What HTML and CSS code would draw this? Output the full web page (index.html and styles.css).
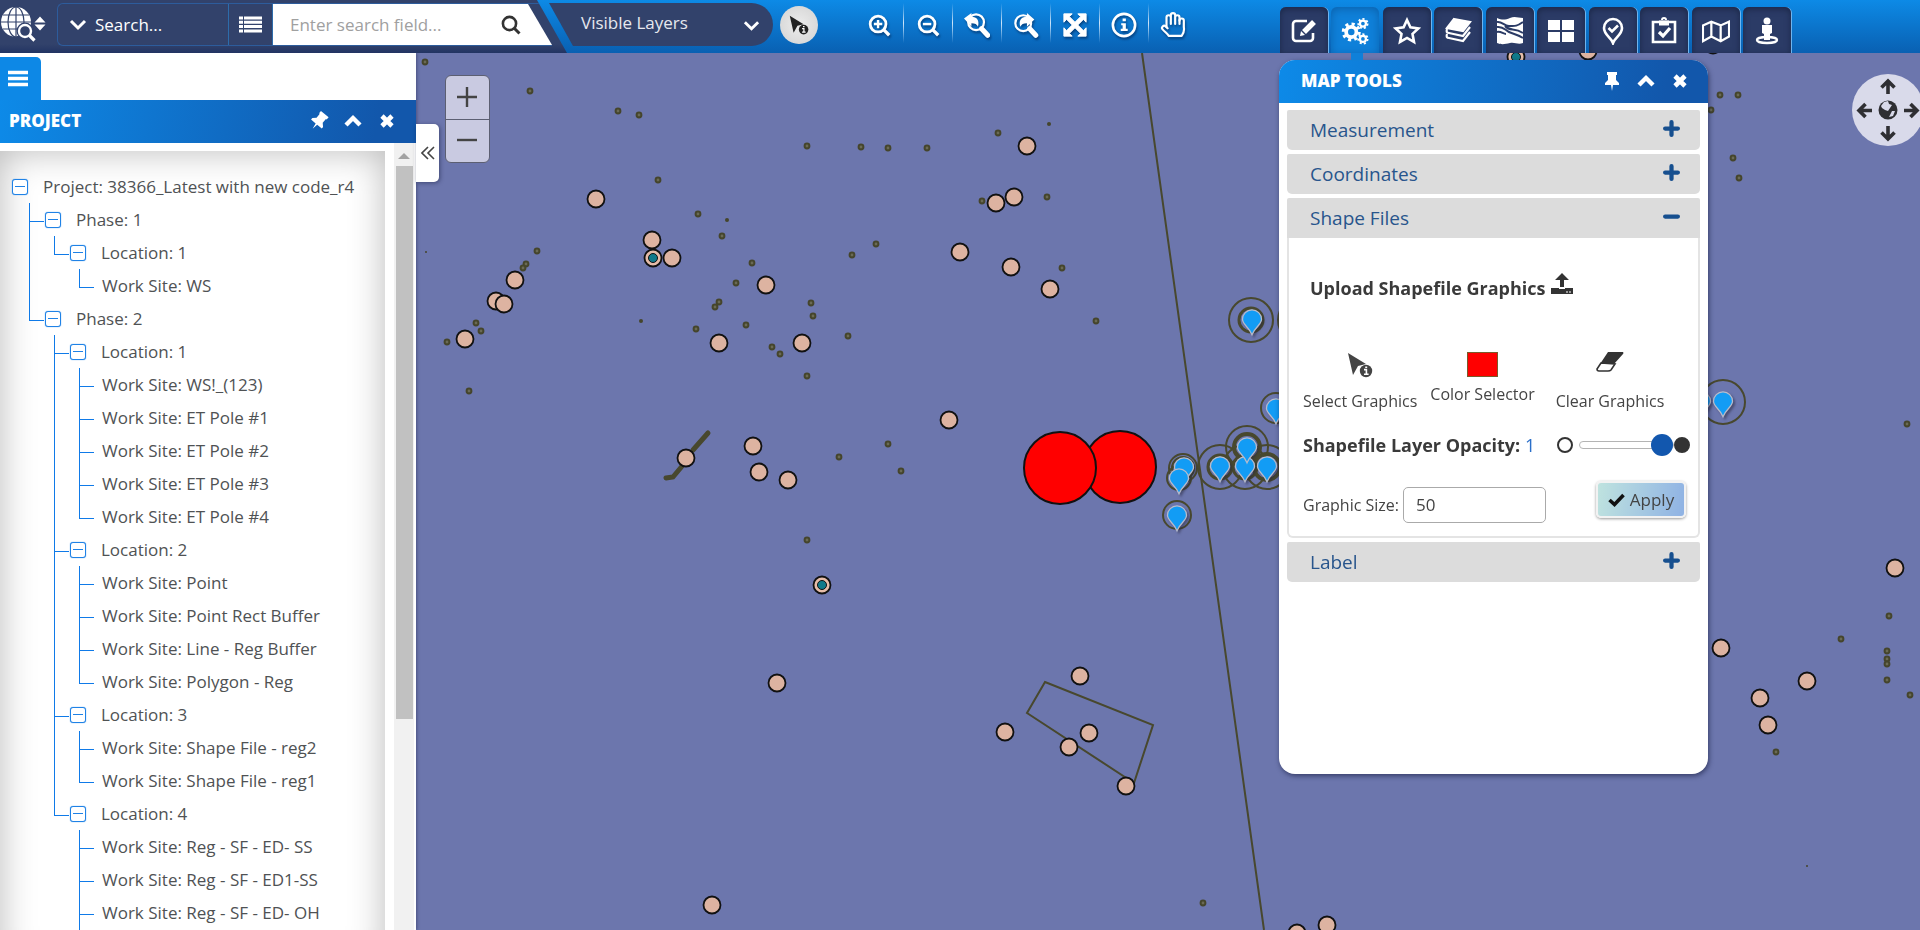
FILE: index.html
```html
<!DOCTYPE html>
<html lang="en">
<head>
<meta charset="utf-8">
<title>Project Map</title>
<link rel="stylesheet" href="styles.css">
</head>
<body>
<svg class="defs" aria-hidden="true">
  <symbol id="chevron-down" viewBox="0 0 18 12"><path d="M2 2l7 7 7-7" fill="none" stroke="currentColor" stroke-width="3"/></symbol>
  <symbol id="chevron-up" viewBox="0 0 18 14"><path d="M2 11l7-7 7 7" fill="none" stroke="currentColor" stroke-width="4.4"/></symbol>
  <symbol id="cross" viewBox="0 0 16 16"><path d="M3 3l10 10M13 3L3 13" stroke="currentColor" stroke-width="4.6"/></symbol>
  <symbol id="plus" viewBox="0 0 16 16"><path d="M8 2v12M2 8h12" stroke="currentColor" stroke-width="4" stroke-linecap="round"/></symbol>
  <symbol id="minus" viewBox="0 0 16 16"><path d="M2 8h12" stroke="currentColor" stroke-width="4" stroke-linecap="round"/></symbol>
  <symbol id="pin" viewBox="0 0 16 20"><path d="M3 1h10v3h-1v5l3 3v2H9l-1 6-1-6H1v-2l3-3V4H3z" fill="currentColor"/></symbol>
  <symbol id="pointer-info" viewBox="0 0 26 26"><path d="M1 1l18 11-8 2-5 9z" fill="currentColor"/><circle cx="19" cy="19" r="6.2" fill="currentColor"/><path d="M17 17.6h2.4V22M17 22.2h4.6M18.2 15.2h2" stroke="#fff" stroke-width="1.6" fill="none"/></symbol>
  <symbol id="drop" viewBox="0 0 26 32"><path d="M13 2a10.500 10.500 0 0 1 10.500 10.500c0 6-7 8-10.500 17C9.500 20.500 2.500 18.500 2.500 12.500A10.500 10.500 0 0 1 13 2z" fill="#129cf5" stroke="#b9bccb" stroke-width="1.400"/></symbol>
</svg>

<header class="topbar">
  <div class="search-zone">
    <svg class="logo" viewBox="0 0 46 40" aria-hidden="true">
      <circle cx="16" cy="19" r="15" fill="#fff"/>
      <g fill="none" stroke="#32426b" stroke-width="1.2"><path d="M16 4v30M1 19h30M3 12h26M3 26h26"/><ellipse cx="16" cy="19" rx="8" ry="15"/></g>
      <circle cx="25" cy="28" r="8.500" fill="#32426b"/><path d="M29 32l6 6" stroke="#32426b" stroke-width="6"/>
      <circle cx="25" cy="28" r="6" fill="#32426b" stroke="#fff" stroke-width="2.4"/><path d="M29.500 32.500l5 5" stroke="#fff" stroke-width="3.200"/>
      <path d="M34.500 19.500l5.500-6 5.500 6zM34.500 21.500l5.500 6 5.500-6z" fill="#fff"/>
    </svg>
    <div class="search-box">
      <button class="search-scope" type="button"><svg width="18" height="12"><use href="#chevron-down"/></svg>Search...</button>
      <button class="search-list" type="button" aria-label="List"><svg width="23" height="17" viewBox="0 0 23 17"><path d="M0 2h4M5 2h18M0 6.300h4M5 6.300h18M0 10.600h4M5 10.600h18M0 15h4M5 15h18" stroke="#fff" stroke-width="3"/></svg></button>
      <div class="search-field">
        <input type="text" aria-label="Search field" placeholder="Enter search field...">
        <button type="button" aria-label="Search"><svg width="20" height="20" viewBox="0 0 20 20"><circle cx="8.500" cy="8.500" r="6.600" fill="none" stroke="#333" stroke-width="2.600"/><path d="M13 13l5.500 5.500" stroke="#333" stroke-width="3"/></svg></button>
      </div>
    </div>
  </div>
  <button class="layers" type="button"><span>Visible Layers</span><svg width="17" height="12"><use href="#chevron-down"/></svg></button>
  <button class="identify" type="button" aria-label="Select graphics"><svg width="20" height="20"><use href="#pointer-info"/></svg></button>

  <nav class="tools" aria-label="Map navigation">
    <button type="button" aria-label="Zoom in"><svg viewBox="0 0 28 28"><g fill="none" stroke="#fff"><circle cx="13" cy="13" r="8.500" stroke-width="3"/><path d="M13 8.500v9M8.500 13h9" stroke-width="2.600"/><path d="M19 19l6 6" stroke-width="3.600"/></g></svg></button>
    <button type="button" aria-label="Zoom out"><svg viewBox="0 0 28 28"><g fill="none" stroke="#fff"><circle cx="13" cy="13" r="8.500" stroke-width="3"/><path d="M8.500 13h9" stroke-width="2.600"/><path d="M19 19l6 6" stroke-width="3.600"/></g></svg></button>
    <button type="button" aria-label="Previous extent"><svg viewBox="0 0 28 28"><circle cx="13" cy="11" r="8.500" fill="none" stroke="#fff" stroke-width="2.400"/><path d="M19 18l6.500 7" stroke="#fff" stroke-width="5.500" stroke-linecap="round"/><path d="M0 7l8-6v4c6 0 9 4 7 11-1-3-3-4-7-4v4z" fill="#fff"/></svg></button>
    <button type="button" aria-label="Next extent"><svg viewBox="0 0 28 28"><circle cx="11" cy="12" r="8.500" fill="none" stroke="#fff" stroke-width="2.400"/><path d="M18 18l6.500 7" stroke="#fff" stroke-width="5.500" stroke-linecap="round"/><path d="M23 8l-8-7v4c-7 0-9 5-7 11 1-3 3-4 7-4v4z" fill="#fff"/></svg></button>
    <button type="button" aria-label="Full extent"><svg viewBox="0 0 28 28"><path d="M2 2h9L8 5l6 6 6-6-3-3h9v9l-3-3-6 6 6 6 3-3v9h-9l3-3-6-6-6 6 3 3H2v-9l3 3 6-6-6-6-3 3z" fill="#fff" stroke="#fff"/></svg></button>
    <button type="button" aria-label="Information"><svg viewBox="0 0 28 28"><circle cx="14" cy="14" r="12" fill="none" stroke="#fff" stroke-width="2.800"/><path d="M12.500 7h3.500v3h-3.500zM11 12h5v6h2v2.400h-7.500V18h2v-3.600H11z" fill="#fff"/></svg></button>
    <button type="button" aria-label="Pan"><svg viewBox="0 0 24 24" fill="none" stroke="#fff" stroke-width="2" stroke-linecap="round" stroke-linejoin="round"><path d="M18 11V5a2 2 0 0 0-4 0M14 10V3a2 2 0 0 0-4 0v2M10 10.500V5a2 2 0 0 0-4 0v9M10 5v6M14 5v6"/><path d="M18 8a2 2 0 1 1 4 0v6a10 10 0 0 1-2 8H8c-1-2-3-3-5.600-5.940a2 2 0 0 1 2.830-2.820L7 15"/></svg></button>
  </nav>

  <nav class="tabs" aria-label="Panels">
    <button type="button" aria-label="Edit"><svg viewBox="0 0 28 28" fill="none" stroke="#fff"><path d="M17 4H6a3 3 0 0 0-3 3v14a3 3 0 0 0 3 3h14a3 3 0 0 0 3-3v-5" stroke-width="2.600"/><path d="M14 15l10-10" stroke-width="5.500"/><path d="M10 19l1-5 4 4z" fill="#fff" stroke="none"/></svg></button>
    <button class="active" type="button" aria-label="Map tools"><svg viewBox="0 0 30 30" fill="none" stroke="#fff"><circle cx="11" cy="16" r="5.500" stroke-width="4"/><circle cx="11" cy="16" r="8.500" stroke-width="3.400" stroke-dasharray="3.340"/><circle cx="23.500" cy="7" r="3.200" stroke-width="2.400"/><circle cx="23.500" cy="7" r="5" stroke-width="2" stroke-dasharray="2.240"/><circle cx="23.500" cy="23.500" r="3.200" stroke-width="2.400"/><circle cx="23.500" cy="23.500" r="5" stroke-width="2" stroke-dasharray="2.240"/></svg></button>
    <button type="button" aria-label="Favorites"><svg viewBox="0 0 28 28"><path d="M14 3l3.400 7.400 8 1-5.900 5.500 1.500 8-7-4-7 4 1.500-8-5.900-5.500 8-1z" fill="none" stroke="#fff" stroke-width="2.600"/></svg></button>
    <button type="button" aria-label="Layers"><svg viewBox="0 0 28 28" fill="none" stroke="#fff" stroke-width="2.200"><path d="M10 2l16 3-7 9-16-3z" fill="#fff"/><path d="M3 12c-1 3 0 4 2 4l14 3 7-9M3 17c-1 3 0 4 2 4l14 3 7-9"/></svg></button>
    <button type="button" aria-label="Basemap"><svg viewBox="0 0 28 28"><path d="M1 1c5 2 8 2 13 0s8 0 13 0v25c-5 2-8-1-13 0s-8 2-13 0z" fill="#fff"/><path d="M1 5c5-1 7 4 12 4s7 1 14-4M1 10c6-1 8 3 12 5s8 2 14 6M9 9c5 6 9 1 18 7M1 15c4-1 6 2 9 2" fill="none" stroke="#2b3b66" stroke-width="2"/></svg></button>
    <button type="button" aria-label="Grid"><svg viewBox="0 0 28 28"><path d="M1 3h12v10H1zM15 3h12v10H15zM1 15h12v10H1zM15 15h12v10H15z" fill="#fff"/></svg></button>
    <button type="button" aria-label="Locations"><svg viewBox="0 0 28 28" fill="none" stroke="#fff" stroke-width="2.600"><path d="M14 26c-2-6-9-8-9-15a9 9 0 0 1 18 0c0 7-7 9-9 15z"/><path d="M9.500 11l3.500 3.500 6-6"/></svg></button>
    <button type="button" aria-label="Tasks"><svg viewBox="0 0 28 28" fill="none" stroke="#fff" stroke-width="2.600"><path d="M3 5h22v20H3z"/><path d="M9 6h10" stroke-width="5"/><path d="M12 3a2 2 0 0 1 4 0" stroke-width="2"/><path d="M9 15l4 4 7-8" stroke-width="3.200"/></svg></button>
    <button type="button" aria-label="Map"><svg viewBox="0 0 30 28" fill="none" stroke="#fff" stroke-width="2.400"><path d="M1 8l9-4 10 4 9-4v16l-9 5-10-5-9 5zM10 4v16M20 8v17"/></svg></button>
    <button type="button" aria-label="Street view"><svg viewBox="0 0 28 28"><ellipse cx="14" cy="23" rx="10" ry="3" fill="none" stroke="#fff" stroke-width="2.400"/><circle cx="14" cy="4" r="3.500" fill="#fff"/><path d="M9 8h10v8l-2 1v6h-6v-6l-2-1z" fill="#fff"/></svg></button>
  </nav>
</header>

<main class="workspace">
  <svg class="map" aria-label="Map">
    <defs>
      <circle id="w" r="8.500" fill="#ddb3a1" stroke="#111" stroke-width="1.800"/>
      <g id="t"><circle r="8.500" fill="#e6bda9" stroke="#111" stroke-width="1.800"/><circle r="4.500" fill="#107a8a" stroke="#111"/></g>
      <circle id="d" r="2.400" fill="#6a6a55" stroke="#45452c" stroke-width="2"/>
      <circle id="s" r="2" fill="#45452c"/>
    </defs>
    <g transform="translate(0 -53)">
      <g fill="none" stroke="#48482e" stroke-width="2">
        <path d="M1142 53L1264 930M1045 682L1153 725L1134 783L1027 713Z"/>
        <path d="M666 478l7-1 10-12M693 450l15-17" stroke-width="5" stroke-linecap="round"/>
      </g>
      <g>
        <use href="#d" x="618" y="111"/><use href="#d" x="639" y="115"/><use href="#d" x="807" y="146"/><use href="#d" x="861" y="147"/><use href="#d" x="888" y="148"/><use href="#d" x="927" y="148"/><use href="#d" x="658" y="180"/><use href="#d" x="698" y="214"/><use href="#s" x="727" y="220"/><use href="#d" x="722" y="236"/><use href="#d" x="876" y="244"/><use href="#d" x="852" y="255"/><use href="#d" x="752" y="263"/><use href="#d" x="736" y="283"/><use href="#d" x="537" y="251"/><use href="#d" x="526" y="264"/><use href="#d" x="523" y="268"/><use href="#d" x="719" y="302"/><use href="#d" x="715" y="307"/><use href="#d" x="811" y="303"/><use href="#d" x="813" y="316"/><use href="#d" x="696" y="329"/><use href="#d" x="746" y="325"/><use href="#s" x="641" y="321"/><use href="#d" x="848" y="336"/><use href="#d" x="772" y="347"/><use href="#d" x="780" y="354"/><use href="#d" x="807" y="376"/><use href="#d" x="469" y="391"/><use href="#d" x="476" y="323"/><use href="#d" x="481" y="331"/><use href="#d" x="447" y="342"/><use href="#d" x="888" y="444"/><use href="#d" x="839" y="457"/><use href="#d" x="901" y="471"/><use href="#d" x="425" y="62"/><use href="#d" x="530" y="91"/><use href="#d" x="998" y="133"/><use href="#s" x="1049" y="124"/><use href="#d" x="982" y="201"/><use href="#d" x="1047" y="197"/><use href="#d" x="1062" y="268"/><use href="#d" x="1096" y="321"/><use href="#d" x="807" y="540"/><use href="#d" x="1203" y="903"/><use href="#d" x="1720" y="95"/><use href="#d" x="1738" y="95"/><use href="#d" x="1711" y="110"/><use href="#d" x="1733" y="158"/><use href="#d" x="1739" y="178"/><use href="#d" x="1907" y="424"/><use href="#d" x="1889" y="616"/><use href="#d" x="1841" y="639"/><use href="#d" x="1887" y="651"/><use href="#d" x="1887" y="659"/><use href="#d" x="1887" y="664"/><use href="#d" x="1887" y="680"/><use href="#d" x="1910" y="695"/><use href="#d" x="1776" y="752"/>
        <circle cx="426" cy="252" r="1" fill="#45452c"/><circle cx="1807" cy="866" r="1" fill="#45452c"/>
      </g>
      <g>
        <use href="#w" x="596" y="199"/><use href="#w" x="652" y="240"/><use href="#w" x="672" y="258"/><use href="#t" x="653" y="258"/><use href="#w" x="515" y="280"/><use href="#w" x="496" y="301"/><use href="#w" x="504" y="304"/><use href="#w" x="465" y="339"/><use href="#w" x="766" y="285"/><use href="#w" x="719" y="343"/><use href="#w" x="802" y="343"/><use href="#w" x="686" y="458"/><use href="#w" x="753" y="446"/><use href="#w" x="759" y="472"/><use href="#w" x="788" y="480"/><use href="#w" x="1027" y="146"/><use href="#w" x="996" y="203"/><use href="#w" x="1014" y="197"/><use href="#w" x="960" y="252"/><use href="#w" x="1011" y="267"/><use href="#w" x="1050" y="289"/><use href="#w" x="949" y="420"/><use href="#w" x="777" y="683"/><use href="#t" x="822" y="585"/><use href="#w" x="712" y="905"/><use href="#w" x="1080" y="676"/><use href="#w" x="1005" y="732"/><use href="#w" x="1089" y="733"/><use href="#w" x="1069" y="747"/><use href="#w" x="1126" y="786"/><use href="#w" x="1327" y="925"/><use href="#w" x="1297" y="933"/><use href="#w" x="1895" y="568"/><use href="#w" x="1721" y="648"/><use href="#w" x="1807" y="681"/><use href="#w" x="1760" y="698"/><use href="#w" x="1768" y="725"/><use href="#t" x="1516" y="57"/><use href="#w" x="1588" y="51"/><use href="#w" x="1713" y="45"/>
      </g>
      <g fill="#f00" stroke="#111" stroke-width="2"><circle cx="1120" cy="467" r="36"/><circle cx="1060" cy="468" r="36"/></g>
      <g fill="none" stroke="#48482e" stroke-width="2">
        <circle cx="1251" cy="320" r="22"/><circle cx="1251" cy="320" r="12" stroke-width="3"/><circle cx="1300" cy="320" r="22"/>
        <circle cx="1276" cy="408" r="15"/><circle cx="1183" cy="468" r="14"/><circle cx="1183" cy="468" r="11"/><circle cx="1179" cy="478" r="12"/>
        <circle cx="1177" cy="515" r="14"/><circle cx="1220" cy="467" r="22"/><circle cx="1220" cy="467" r="12" stroke-width="3"/>
        <circle cx="1245" cy="467" r="22"/><circle cx="1245" cy="467" r="12" stroke-width="3"/><circle cx="1267" cy="467" r="22"/><circle cx="1267" cy="467" r="13" stroke-width="4"/>
        <circle cx="1247" cy="447" r="21"/><circle cx="1247" cy="447" r="13" stroke-width="4"/><circle cx="1723" cy="402" r="22"/>
      </g>
      <g class="drops">
        <use href="#drop" x="1240" y="308" width="24" height="29"/><use href="#drop" x="1264" y="397" width="24" height="29"/><use href="#drop" x="1172" y="456" width="24" height="29"/><use href="#drop" x="1167" y="467" width="24" height="29"/><use href="#drop" x="1165" y="504" width="24" height="29"/><use href="#drop" x="1208" y="455" width="24" height="29"/><use href="#drop" x="1233" y="455" width="24" height="29"/><use href="#drop" x="1255" y="455" width="24" height="29"/><use href="#drop" x="1235" y="436" width="24" height="29"/><use href="#drop" x="1689" y="390" width="24" height="29"/><use href="#drop" x="1711" y="390" width="24" height="29"/>
      </g>
    </g>
  </svg>

  <aside class="sidebar">
    <div class="sidebar-tabs"><button type="button" aria-label="Menu"><svg width="20" height="17" viewBox="0 0 20 17"><path d="M0 2.500h20M0 8.500h20M0 14.500h20" stroke="#fff" stroke-width="3.400"/></svg></button></div>
    <div class="bar">
      <h2>PROJECT</h2>
      <button type="button" aria-label="Pin"><svg class="tilted" width="16" height="20"><use href="#pin"/></svg></button>
      <button type="button" aria-label="Collapse"><svg width="18" height="14"><use href="#chevron-up"/></svg></button>
      <button type="button" aria-label="Close"><svg width="16" height="16"><use href="#cross"/></svg></button>
    </div>
    <div class="sidebar-body">
      <div class="tree-panel">
        <ul class="tree">
          <li><div class="row"><button class="toggle" type="button" aria-label="Collapse"></button>Project: 38366_Latest with new code_r4</div>
            <ul class="branch phases">
              <li><div class="row"><button class="toggle" type="button" aria-label="Collapse"></button>Phase: 1</div>
                <ul class="branch">
                  <li><div class="row"><button class="toggle" type="button" aria-label="Collapse"></button>Location: 1</div>
                    <ul class="branch sites"><li>Work Site: WS</li></ul>
                  </li>
                </ul>
              </li>
              <li><div class="row"><button class="toggle" type="button" aria-label="Collapse"></button>Phase: 2</div>
                <ul class="branch">
                  <li><div class="row"><button class="toggle" type="button" aria-label="Collapse"></button>Location: 1</div>
                    <ul class="branch sites"><li>Work Site: WS!_(123)</li><li>Work Site: ET Pole #1</li><li>Work Site: ET Pole #2</li><li>Work Site: ET Pole #3</li><li>Work Site: ET Pole #4</li></ul>
                  </li>
                  <li><div class="row"><button class="toggle" type="button" aria-label="Collapse"></button>Location: 2</div>
                    <ul class="branch sites"><li>Work Site: Point</li><li>Work Site: Point Rect Buffer</li><li>Work Site: Line - Reg Buffer</li><li>Work Site: Polygon - Reg</li></ul>
                  </li>
                  <li><div class="row"><button class="toggle" type="button" aria-label="Collapse"></button>Location: 3</div>
                    <ul class="branch sites"><li>Work Site: Shape File - reg2</li><li>Work Site: Shape File - reg1</li></ul>
                  </li>
                  <li><div class="row"><button class="toggle" type="button" aria-label="Collapse"></button>Location: 4</div>
                    <ul class="branch sites"><li>Work Site: Reg - SF - ED- SS</li><li>Work Site: Reg - SF - ED1-SS</li><li class="continues">Work Site: Reg - SF - ED- OH</li></ul>
                  </li>
                </ul>
              </li>
            </ul>
          </li>
        </ul>
      </div>
      <div class="scrollbar"><svg width="12" height="6" viewBox="0 0 12 6"><path d="M0 6l6-6 6 6z" fill="#a3a3a3"/></svg><div class="thumb"></div></div>
    </div>
  </aside>

  <button class="fold" type="button" aria-label="Hide sidebar"><svg width="14" height="14" viewBox="0 0 14 14"><path d="M7 1L1 7l6 6M13 1L7 7l6 6" fill="none" stroke="#444" stroke-width="1.600"/></svg></button>

  <div class="zoomer">
    <button type="button" aria-label="Zoom in"><svg width="22" height="22" viewBox="0 0 22 22"><path d="M11 1v20M1 11h20" stroke="#444" stroke-width="2.400"/></svg></button>
    <button type="button" aria-label="Zoom out"><svg width="22" height="22" viewBox="0 0 22 22"><path d="M1 11h20" stroke="#444" stroke-width="2.400"/></svg></button>
  </div>

  <button class="compass" type="button" aria-label="Pan map"><svg viewBox="0 0 72 72"><g fill="none" stroke="#2f2f33" stroke-width="3.600"><path d="M36 20V8M29.500 13.500L36 7l6.500 6.500M36 52v12M29.500 58.500L36 65l6.500-6.500M20 36.500H8M13.500 30L7 36.500l6.500 6.500M52 36.500h12M58.500 30l6.500 6.500-6.500 6.500"/></g><circle cx="36" cy="36" r="9.500" fill="#2f2f33"/><path d="M29 32l3-4 4-1 1 3 3 1-4 6-3-1-3-2zM40 37l3 0-2 5-4 1z" fill="#d9daea"/></svg></button>

  <section class="panel">
    <div class="bar">
      <h2>MAP TOOLS</h2>
      <button type="button" aria-label="Pin"><svg width="16" height="20"><use href="#pin"/></svg></button>
      <button type="button" aria-label="Collapse"><svg width="18" height="14"><use href="#chevron-up"/></svg></button>
      <button type="button" aria-label="Close"><svg width="16" height="16"><use href="#cross"/></svg></button>
    </div>
    <div class="accordion">
      <button class="fold-head" type="button">Measurement<svg width="17" height="17"><use href="#plus"/></svg></button>
      <button class="fold-head" type="button">Coordinates<svg width="17" height="17"><use href="#plus"/></svg></button>
      <div class="fold-open">
        <button class="fold-head" type="button">Shape Files<svg width="17" height="17"><use href="#minus"/></svg></button>
        <form class="shape-form">
          <button class="upload" type="button">Upload Shapefile Graphics<svg width="24" height="24" viewBox="0 0 24 24"><path d="M12 1l7 7h-5v7h-4V8H5zM1 16h8v1h6v-1h8v6H1z" fill="#333"/><path d="M16 20h2M19 20h2" stroke="#fff"/></svg></button>
          <div class="actions">
            <button type="button"><svg width="26" height="26"><use href="#pointer-info"/></svg>Select Graphics</button>
            <button class="color" type="button"><span class="swatch"></span>Color Selector</button>
            <button type="button"><svg width="28" height="20" viewBox="0 0 28 20"><path d="M12 0h15q1 1 0 2L18 12H4z" fill="#333"/><path d="M5 11L1 17q0 2 2 2h9q2 0 3-1l4-6z" fill="#fff" stroke="#333" stroke-width="1.600"/></svg>Clear Graphics</button>
          </div>
          <div class="opacity">
            <label for="opacity">Shapefile Layer Opacity: <output>1</output></label>
            <span class="dot hollow"></span>
            <input id="opacity" type="range" min="0" max="1" step="0.100" value="1">
            <span class="dot"></span>
          </div>
          <div class="size">
            <label for="size">Graphic Size:</label>
            <input id="size" type="text" value="50">
            <button type="button"><svg width="17" height="14" viewBox="0 0 17 14"><path d="M1.500 7l5 4.500L15.500 2" fill="none" stroke="#111" stroke-width="3.600"/></svg>Apply</button>
          </div>
        </form>
      </div>
      <button class="fold-head" type="button">Label<svg width="17" height="17"><use href="#plus"/></svg></button>
    </div>
  </section>
</main>
</body>
</html>
```

FILE: styles.css
```css
* { box-sizing: border-box; }
html, body { height: 100%; }
body {
  margin: 0;
  display: flex;
  flex-direction: column;
  overflow: hidden;
  font: 17px/24px "Open Sans", "Noto Sans", sans-serif;
  color: #4f5254;
}
button {
  margin: 0;
  padding: 0;
  border: 0;
  background: none;
  font: inherit;
  color: inherit;
  cursor: pointer;
}
button, .bar { display: flex; align-items: center; }
svg { display: block; flex: none; }
input { font: inherit; min-width: 0; }
ul { list-style: none; margin: 0; padding: 0; }
.defs { position: absolute; width: 0; height: 0; }

/* Top bar */
.topbar {
  flex: none;
  display: flex;
  align-items: flex-start;
  height: 53px;
  background: linear-gradient(#0d8ae6, #0b75cc 50%, #0960b2);
}
.search-zone {
  flex: none;
  display: flex;
  align-items: flex-start;
  width: 567px;
  height: 53px;
  padding: 3px 15px 0 0;
  background: linear-gradient(#32426b 44px, #223463);
  clip-path: polygon(0 0, 537px 0, 100% 100%, 0 100%);
}
.logo { width: 46px; height: 40px; margin-right: 11px; }
.search-box {
  flex: 1;
  display: flex;
  min-width: 0;
  height: 43px;
  border: 1px solid #2d5c9c;
  border-right: 0;
  border-radius: 6px 0 0 6px;
}
.search-scope { flex: none; width: 170px; padding-left: 11px; gap: 8px; color: #fff; }
.search-list { flex: none; width: 45px; justify-content: center; border: solid #2d6cab; border-width: 0 1px; }
.search-field {
  flex: 1;
  display: flex;
  min-width: 0;
  background: #fff;
  clip-path: polygon(0 0, calc(100% - 24px) 0, 100% 100%, 0 100%);
}
.search-field input { flex: 1; border: 0; padding: 0 0 0 17px; background: none; }
.search-field input::placeholder { color: #a0a0a0; }
.search-field button { width: 20px; margin-right: 31px; }
.layers {
  justify-content: space-between;
  width: 224px;
  height: 43px;
  margin: 3px 0 0 -18px;
  padding: 0 13px 4px 32px;
  border-radius: 0 22px 22px 0;
  background: #32426b;
  clip-path: polygon(0 0, 100% 0, 100% 100%, 24px 100%);
  color: #e6e8ee;
  font-weight: 500;
}
.layers svg { margin-top: 6px; color: #fff; }
.identify {
  justify-content: center;
  width: 38px;
  height: 38px;
  margin: 6px 0 0 7px;
  border-radius: 50%;
  background: radial-gradient(#ececec, #d2d2d2);
  color: #222;
}
.tools { display: flex; margin-left: 36px; }
.tools button { position: relative; justify-content: center; width: 49px; height: 50px; }
.tools button + button::before {
  content: "";
  position: absolute;
  left: 0;
  top: 3px;
  width: 1px;
  height: 40px;
  background: linear-gradient(transparent, #cfe6fa 50%, transparent);
}
.tools svg { width: 26px; height: 26px; filter: drop-shadow(1px 2px 1px rgba(0, 20, 60, .5)); }
.tabs { display: flex; justify-content: space-between; width: 511px; margin: 7px 129px 0 auto; }
.tabs button {
  justify-content: center;
  width: 48px;
  height: 46px;
  padding-top: 2px;
  border-radius: 6px 6px 0 0;
  background: #2b3b66;
  box-shadow: inset 0 2px 6px #1b2748, 1px 0 0 #6fb4ee;
}
.tabs .active { background: #0f80d9; box-shadow: inset 0 2px 8px #0b62ad; }
.tabs svg { width: 28px; height: 28px; }

/* Map */
.workspace { position: relative; flex: 1; display: flex; min-height: 0; overflow: hidden; background: #6c76ad; }
.map { position: absolute; inset: 0; width: 100%; height: 100%; }
.drops { filter: drop-shadow(2px 2px 1px rgba(40, 40, 60, .5)); }
.zoomer {
  position: absolute;
  left: 445px;
  top: 22px;
  width: 45px;
  border: 1px solid #5c5f72;
  border-radius: 6px;
  background: #c9cae1;
}
.zoomer button { justify-content: center; width: 100%; height: 43px; padding: 0 1px 2px 0; }
.zoomer button + button { border-top: 1px solid #5c5f72; }
.compass { position: absolute; right: -4px; top: 21px; width: 72px; height: 72px; border-radius: 50%; background: #d9daea; }
.fold {
  position: relative;
  justify-content: center;
  width: 23px;
  height: 58px;
  margin-top: 71px;
  border-radius: 0 5px 5px 0;
  background: #fff;
  box-shadow: 1px 1px 4px rgba(20, 25, 60, .5);
}

/* Shared title bar */
.bar {
  flex: none;
  height: 43px;
  padding-bottom: 2px;
  color: #fff;
  background: linear-gradient(100deg, #0d8ae8, #1257ab 90%);
}
.bar h2 { flex: 1; margin: 0; font-size: 17px; line-height: 24px; font-weight: 800; }
.bar button { justify-content: center; width: 34px; height: 34px; }
.tilted { transform: rotate(40deg); }

/* Sidebar */
.sidebar {
  position: relative;
  flex: none;
  display: flex;
  flex-direction: column;
  width: 416px;
  background: #fff;
  box-shadow: 1px 0 3px rgba(20, 25, 60, .4);
}
.sidebar-tabs { height: 47px; padding-top: 4px; }
.sidebar-tabs button { width: 41px; height: 43px; padding-left: 8px; border-radius: 0 5px 0 0; background: #0d88e6; }
.sidebar .bar { padding-left: 9px; padding-right: 12px; }
.sidebar-body { flex: 1; display: flex; gap: 9px; min-height: 0; overflow: hidden; }
.tree-panel {
  width: 385px;
  margin: 8px 0 -40px;
  padding-top: 19px;
  background: #fff;
  box-shadow: inset 0 0 36px rgba(0, 0, 0, .28);
}
.tree > li { padding-left: 12px; }
.row { display: flex; align-items: center; gap: 15px; height: 33px; white-space: nowrap; }
.toggle {
  position: relative;
  flex: none;
  justify-content: center;
  width: 16px;
  height: 16px;
  border: 1px solid #1f82e6;
  border-radius: 3px;
  background: #fff;
  box-shadow: 0 0 1px #1f82e6;
}
.toggle::before { content: ""; width: 10px; height: 1px; background: #1f82e6; }
.branch { margin-left: 9px; }
.phases { margin-left: 17px; }
.branch > li { position: relative; padding-left: 16px; }
.branch > li::before {
  content: "";
  position: absolute;
  left: 0;
  top: 0;
  width: 14px;
  height: 18px;
  border: solid #0f7ae8;
  border-width: 0 0 1px 1px;
}
.branch > li:not(:last-child)::after, .branch > .continues::after {
  content: "";
  position: absolute;
  left: 0;
  top: 0;
  bottom: 0;
  border-left: 1px solid #0f7ae8;
}
.sites > li { height: 33px; padding-left: 23px; line-height: 33px; white-space: nowrap; }
.sites > .continues { height: 40px; }
.scrollbar { flex: 1; display: flex; flex-direction: column; align-items: center; margin-right: 2px; padding: 10px 0 8px; background: #f1f1f1; }
.thumb { width: 17px; height: 553px; margin-top: 7px; background: #c1c1c1; }

/* Map tools panel */
.panel {
  position: absolute;
  right: 212px;
  top: 7px;
  width: 429px;
  height: 714px;
  border-radius: 16px;
  background: #fff;
  box-shadow: 1px 2px 5px rgba(20, 25, 60, .6);
}
.panel::before { content: ""; position: absolute; left: 72px; top: -7px; width: 12px; height: 8px; background: #0f80d9; }
.panel .bar { padding-left: 22px; padding-right: 11px; border-radius: 16px 16px 0 0; }
.accordion { display: flex; flex-direction: column; gap: 4px; padding: 7px 8px; }
.fold-head {
  justify-content: space-between;
  width: 100%;
  height: 40px;
  padding: 0 20px 0 23px;
  border-radius: 2px 2px 5px 5px;
  background: #dcdcdc;
  color: #28558c;
  font-size: 19px;
  font-weight: 500;
}
.fold-head svg { margin-bottom: 4px; color: #164f8f; }
.fold-open .fold-head { border-radius: 2px 2px 0 0; }
.shape-form {
  padding: 34px 8px 13px 14px;
  border: 2px solid #e4e4e4;
  border-top: 0;
  border-radius: 0 0 6px 6px;
}
.upload { gap: 5px; margin-left: 7px; font-weight: 700; font-size: 18px; color: #3a3a3a; }
.upload svg { margin-bottom: 8px; }
.actions { display: flex; align-items: flex-start; gap: 13px; margin-top: 48px; font-size: 16px; line-height: 20px; white-space: nowrap; }
.actions button { flex-direction: column; justify-content: space-between; height: 59px; color: #444; }
.actions .color { height: 52px; }
.actions button:last-child { margin-left: 8px; }
.swatch { width: 31px; height: 25px; border: 1px solid #7a5a2a; background: #f00; }
.opacity { display: flex; align-items: center; height: 24px; margin-top: 22px; }
.opacity label { flex: 1; font-weight: 700; font-size: 18px; color: #3a3a3a; white-space: nowrap; }
.opacity output { font-weight: 400; color: #2a6fc9; }
.dot { width: 16px; height: 16px; border: 2px solid #333; border-radius: 50%; background: #333; }
.hollow { margin-right: 6px; background: #fff; }
.opacity input { width: 95px; height: 22px; margin: 0; appearance: none; background: none; }
.opacity input::-webkit-slider-runnable-track { height: 8px; border: 1px solid #b4b4b4; border-radius: 4px; background: #fff; }
.opacity input::-webkit-slider-thumb { appearance: none; width: 22px; height: 22px; margin-top: -8px; border-radius: 50%; background: #1257ae; }
.size { display: flex; align-items: center; margin-top: 24px; padding-right: 4px; font-size: 16px; color: #444; }
.size label { margin: 6px 4px 0 0; }
.size input { width: 143px; height: 36px; margin-top: 5px; padding: 0 12px; border: 1px solid #aaa; border-radius: 5px; font-size: 17px; color: #444; }
.size button {
  gap: 5px;
  justify-content: center;
  width: 90px;
  height: 37px;
  margin: 0 0 5px auto;
  border: 2px solid #f2f2f2;
  border-radius: 5px;
  background: linear-gradient(100deg, #bfe3df, #8fb2e4);
  box-shadow: 0 1px 3px rgba(0, 0, 0, .4);
  font-size: 17px;
}
```
